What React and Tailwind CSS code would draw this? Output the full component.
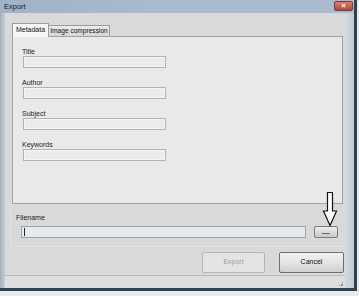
import React from "react";

function Field({ label }) {
  return (
    <div className="flex flex-col">
      <div className="h-[9px] leading-[9px] text-[7px] text-[#1a1a1a]">{label}</div>
      <div className="ml-[1px] w-[143px] h-[12px] border border-[#b3b3b3] bg-[#ebebeb] shadow-[inset_0_0_0_1px_#f4f4f4]" />
    </div>
  );
}

export default function App() {
  return (
    <div
      className="w-[359px] h-[296px] bg-[#e9ecee] overflow-hidden relative"
      style={{ fontFamily: '"Liberation Sans", Arial, sans-serif' }}
    >
      <div className="w-[357px] h-[291px] flex flex-col border-r-[3px] border-b-[3px] border-[#2d4450]">
        {/* title bar */}
        <div className="h-[13px] flex items-center justify-between bg-gradient-to-r from-[#9fb3c7] via-[#aabcce] to-[#a9bbcd] pl-[4px] pr-[1px]">
          <span className="text-[7.5px] leading-[10px] text-[#141c24]">Export</span>
          <div className="w-[19px] h-[10px] mt-[-1px] rounded-[2px] bg-gradient-to-b from-[#d98070] to-[#b2473a] border border-[#7a3a33] flex items-center justify-center">
            <span className="text-[8px] leading-[8px] text-white font-bold">×</span>
          </div>
        </div>
        <div className="flex-1 flex">
          {/* left frame */}
          <div className="w-[5px] bg-gradient-to-r from-[#a6afb8] to-[#c5ced6]" />
          {/* content */}
          <div className="flex-1 flex flex-col bg-[#d9d9d9]">
            <div className="pt-[9px] pl-[7px] pr-[1px]">
              {/* tabs */}
              <div className="flex items-end h-[14px]">
                <div className="w-[37px] h-[14px] bg-[#f6f6f6] border border-b-0 border-[#9c9c9c] text-[7px] leading-[12px] text-center text-[#111] whitespace-nowrap relative z-10 mb-[-1px] pb-[1px]">
                  Metadata
                </div>
                <div className="w-[61px] h-[11px] bg-gradient-to-b from-[#ececec] to-[#d6d6d6] border border-l-0 border-b-0 border-[#9c9c9c] text-[6.6px] leading-[10px] text-center text-[#111] whitespace-nowrap overflow-hidden">
                  Image compression
                </div>
              </div>
              {/* tab panel */}
              <div className="w-[331px] h-[168px] bg-[#e9e9e9] border border-[#a2a2a2] pl-[9px] pt-[10px] flex flex-col gap-[10px]">
                <Field label="Title" />
                <Field label="Author" />
                <Field label="Subject" />
                <Field label="Keywords" />
              </div>
            </div>
            {/* filename group */}
            <div className="mt-[4px] ml-[5px] h-[39px] border-l border-b border-[#e2e2e2] pl-[5px] pt-[5px]">
              <div className="h-[9px] text-[7px] leading-[9px] text-[#1a1a1a]">Filename</div>
              <div className="mt-[4px] flex items-center">
                <div className="ml-[5px] w-[285px] h-[12px] border border-[#8fa6b6] bg-[#e7ebed] flex items-center pl-[2px]">
                  <div className="w-[1px] h-[8px] bg-[#222]" />
                </div>
                <div className="ml-[8px] w-[24px] h-[12px] rounded-[2px] border border-[#7b7b7b] bg-gradient-to-b from-[#ececec] to-[#c9c9c9] flex items-center justify-center">
                  <div className="w-[8px] h-[1px] bg-[#6a6a6a] mt-[3px]" />
                </div>
              </div>
            </div>
            {/* buttons */}
            <div className="flex justify-end gap-[14px] pr-[1px] mt-[5px]">
              <div className="w-[63px] h-[21px] rounded-[2px] border border-[#b5b5b5] bg-[#e4e4e4] flex items-center justify-center text-[7px] text-[#9d9d9d]">
                Export
              </div>
              <div className="w-[65px] h-[21px] rounded-[2px] border border-[#6f6f6f] bg-gradient-to-b from-[#f2f2f2] via-[#e4e4e4] to-[#cfcfcf] flex items-center justify-center text-[7px] text-[#111]">
                Cancel
              </div>
            </div>
            {/* status strip */}
            <div className="mt-[2px] flex-1 border-t border-[#b9b9b9] bg-[#dedede] flex justify-end items-end pr-[1px] pb-[1px]">
              <div className="w-[5px] h-[5px] grid grid-cols-3">
                <span /><span /><span className="bg-[#8a8a8a] w-[1px] h-[1px]" />
                <span /><span className="bg-[#8a8a8a] w-[1px] h-[1px]" /><span className="bg-[#8a8a8a] w-[1px] h-[1px]" />
                <span className="bg-[#8a8a8a] w-[1px] h-[1px]" /><span className="bg-[#8a8a8a] w-[1px] h-[1px]" /><span className="bg-[#8a8a8a] w-[1px] h-[1px]" />
              </div>
            </div>
          </div>
          {/* right frame */}
          <div className="w-[9px] bg-gradient-to-r from-[#d4d9de] to-[#c2cbd3]" />
        </div>
      </div>
      {/* annotation arrow */}
      <svg className="absolute left-[322px] top-[192px]" width="16" height="35" viewBox="0 0 16 35">
        <path
          d="M5.5 0.5 H10.5 V19 H14.5 L8 33.5 L1.5 19 H5.5 Z"
          fill="#ffffff"
          stroke="#111111"
          strokeWidth="1.2"
          strokeLinejoin="miter"
        />
      </svg>
    </div>
  );
}
